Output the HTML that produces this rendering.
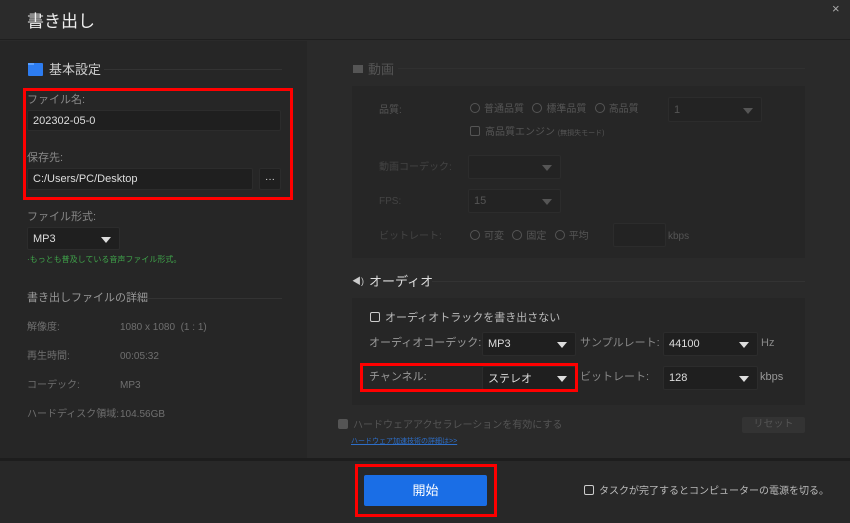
<!DOCTYPE html>
<html><head><meta charset="utf-8"><style>
*{margin:0;padding:0;box-sizing:border-box}
body{width:850px;height:523px;background:#2a2a2a;font-family:"Liberation Sans","Noto Sans CJK JP",sans-serif;position:relative;overflow:hidden;color:#ccc}
.a{position:absolute;white-space:nowrap;line-height:15px}
.inp{position:absolute;background:#1f1f1f;border:1px solid #2c2c2c;border-radius:2px;color:#ddd;font-size:11px;padding-left:5px;display:flex;align-items:center}
.tri{position:absolute;right:8px;top:50%;margin-top:-2px;border-left:5px solid transparent;border-right:5px solid transparent;border-top:6px solid #ddd}
.dim .tri{border-top-color:#555}
.red{position:absolute;border:3px solid #f00}
.lab{font-size:11px;color:#888}
.dl{font-size:10px;color:#6f6f6f}
.rad{display:inline-block;width:10px;height:10px;border:1px solid #555;border-radius:50%;vertical-align:-1px;margin-right:4px}
.cb{display:inline-block;width:10px;height:10px;border:1px solid #ccc;border-radius:2px;vertical-align:-1px;margin-right:5px}
</style></head><body>
<div class="a" style="left:0;top:0;width:850px;height:40px;background:#2b2b2b;border-bottom:1px solid #1f1f1f"></div>
<div class="a" style="left:27px;top:12px;font-size:17px;color:#eee;line-height:20px">書き出し</div>
<div class="a" style="left:832px;top:1px;font-size:13px;color:#aaa">×</div>
<div class="a" style="left:0;top:41px;width:307px;height:417px;background:#262626"></div>
<div class="a" style="left:0;top:458px;width:850px;height:3px;background:#1d1d1d"></div>
<div class="a" style="left:0;top:461px;width:850px;height:62px;background:#282828"></div>
<!-- left -->
<div class="a" style="left:28px;top:63px;width:15px;height:13px;background:#2d7cf0;border-radius:1px"></div>
<div class="a" style="left:28px;top:63px;width:6px;height:2px;background:#5aa0ff"></div>
<div class="a" style="left:49px;top:62px;font-size:13px;color:#ccc">基本設定</div>
<div class="a" style="left:104px;top:69px;width:178px;height:1px;background:#333"></div>
<div class="red" style="left:23px;top:88px;width:270px;height:112px"></div>
<div class="a lab" style="left:27px;top:93px">ファイル名:</div>
<div class="inp" style="left:27px;top:110px;width:254px;height:21px">202302-05-0</div>
<div class="a lab" style="left:27px;top:151px">保存先:</div>
<div class="inp" style="left:27px;top:168px;width:226px;height:22px">C:/Users/PC/Desktop</div>
<div class="inp" style="left:259px;top:168px;width:22px;height:22px;padding:0;justify-content:center;font-size:10px">···</div>
<div class="a lab" style="left:27px;top:210px">ファイル形式:</div>
<div class="inp" style="left:27px;top:227px;width:93px;height:23px">MP3<span class="tri"></span></div>
<div class="a" style="left:27px;top:252px;font-size:8px;color:#3fa34a">·もっとも普及している音声ファイル形式。</div>
<div class="a" style="left:27px;top:291px;font-size:11px;color:#999">書き出しファイルの詳細</div>
<div class="a" style="left:140px;top:298px;width:142px;height:1px;background:#333"></div>
<div class="a dl" style="left:27px;top:320px">解像度:</div><div class="a dl" style="left:120px;top:320px">1080 x 1080 &nbsp;(1 : 1)</div>
<div class="a dl" style="left:27px;top:349px">再生時間:</div><div class="a dl" style="left:120px;top:349px">00:05:32</div>
<div class="a dl" style="left:27px;top:378px">コーデック:</div><div class="a dl" style="left:120px;top:378px">MP3</div>
<div class="a dl" style="left:27px;top:407px">ハードディスク領域:</div><div class="a dl" style="left:120px;top:407px">104.56GB</div>
<!-- video (dim) -->
<div class="dim">
<div class="a" style="left:353px;top:65px;width:10px;height:8px;background:#555"></div>
<div class="a" style="left:368px;top:62px;font-size:13px;color:#555">動画</div>
<div class="a" style="left:398px;top:68px;width:407px;height:1px;background:#303030"></div>
<div class="a" style="left:352px;top:86px;width:453px;height:172px;background:#262626"></div>
<div class="a" style="left:379px;top:103px;font-size:10px;color:#555">品質:</div>
<div class="a" style="left:470px;top:102px;font-size:10px;color:#555"><span class="rad"></span>普通品質 &nbsp;&nbsp;<span class="rad"></span>標準品質 &nbsp;&nbsp;<span class="rad"></span>高品質</div>
<div class="inp" style="left:668px;top:97px;width:94px;height:25px;background:#232323;color:#555">1<span class="tri"></span></div>
<div class="a" style="left:470px;top:125px;font-size:10px;color:#555"><span class="cb" style="border-color:#555"></span>高品質エンジン <span style="font-size:7px">(無損失モード)</span></div>
<div class="a" style="left:379px;top:160px;font-size:10px;color:#444">動画コーデック:</div>
<div class="inp" style="left:468px;top:155px;width:93px;height:24px;background:#232323"><span class="tri"></span></div>
<div class="a" style="left:379px;top:194px;font-size:10px;color:#444">FPS:</div>
<div class="inp" style="left:468px;top:189px;width:93px;height:24px;background:#232323;color:#555">15<span class="tri"></span></div>
<div class="a" style="left:379px;top:229px;font-size:10px;color:#444">ビットレート:</div>
<div class="a" style="left:470px;top:229px;font-size:10px;color:#555"><span class="rad"></span>可変 &nbsp;&nbsp;<span class="rad"></span>固定 &nbsp;&nbsp;<span class="rad"></span>平均</div>
<div class="inp" style="left:613px;top:223px;width:53px;height:24px;background:#232323"></div>
<div class="a" style="left:668px;top:229px;font-size:10px;color:#555">kbps</div>
</div>
<!-- audio -->
<div class="a" style="left:352px;top:274px;font-size:9px;color:#ccc">◀)</div>
<div class="a" style="left:369px;top:274px;font-size:13px;color:#ddd">オーディオ</div>
<div class="a" style="left:432px;top:281px;width:373px;height:1px;background:#333"></div>
<div class="a" style="left:352px;top:298px;width:453px;height:107px;background:#262626"></div>
<div class="a" style="left:370px;top:311px;font-size:11px;color:#bbb"><span class="cb"></span>オーディオトラックを書き出さない</div>
<div class="a lab" style="left:369px;top:336px;color:#999">オーディオコーデック:</div>
<div class="inp" style="left:482px;top:332px;width:94px;height:24px">MP3<span class="tri"></span></div>
<div class="a lab" style="left:580px;top:336px;color:#888">サンプルレート:</div>
<div class="inp" style="left:663px;top:332px;width:95px;height:24px">44100<span class="tri"></span></div>
<div class="a lab" style="left:761px;top:336px;color:#888">Hz</div>
<div class="a lab" style="left:369px;top:370px;color:#999">チャンネル:</div>
<div class="inp" style="left:482px;top:366px;width:94px;height:24px">ステレオ<span class="tri"></span></div>
<div class="red" style="left:360px;top:363px;width:218px;height:29px"></div>
<div class="a lab" style="left:580px;top:370px;color:#888">ビットレート:</div>
<div class="inp" style="left:663px;top:366px;width:95px;height:24px">128<span class="tri"></span></div>
<div class="a lab" style="left:760px;top:370px;color:#999">kbps</div>
<div class="a" style="left:338px;top:419px;width:10px;height:10px;background:#555;border-radius:2px"></div>
<div class="a" style="left:353px;top:418px;font-size:10px;color:#555">ハードウェアアクセラレーションを有効にする</div>
<div class="a" style="left:351px;top:434px;font-size:7px;color:#2d6ec8;text-decoration:underline">ハードウェア加速技術の詳細は&gt;&gt;</div>
<div class="a" style="left:742px;top:417px;width:63px;height:16px;background:#333;border-radius:2px;color:#555;font-size:10px;text-align:center;line-height:16px">リセット</div>
<!-- footer -->
<div class="a" style="left:364px;top:475px;width:123px;height:31px;background:#1a6ee6;border-radius:2px;color:#fff;font-size:13px;text-align:center;line-height:31px">開始</div>
<div class="red" style="left:355px;top:464px;width:142px;height:53px"></div>
<div class="a" style="left:584px;top:484px;font-size:10px;color:#bbb"><span class="cb"></span>タスクが完了するとコンピューターの電源を切る。</div>
</body></html>
